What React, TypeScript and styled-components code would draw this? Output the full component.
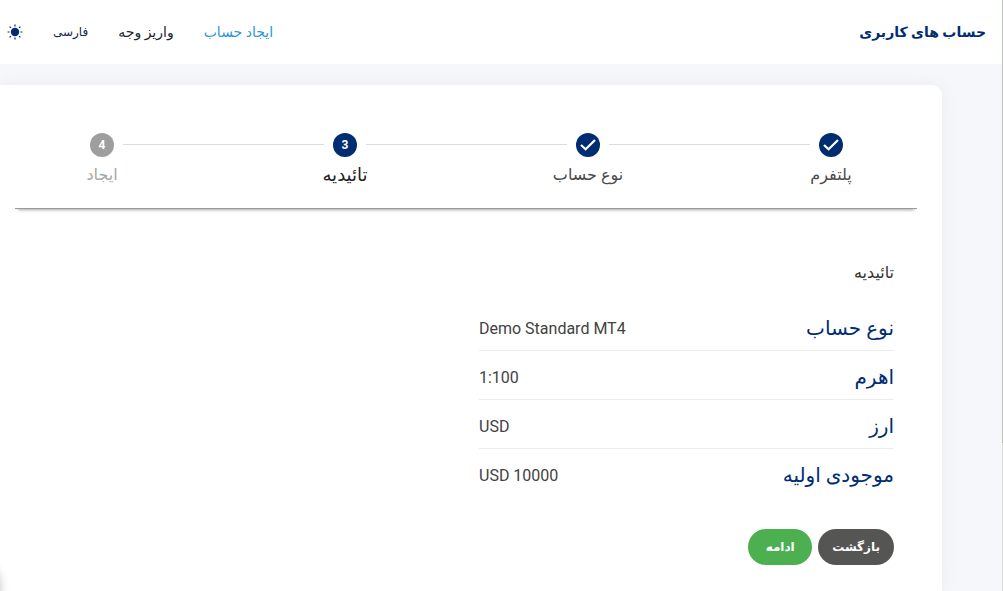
import React from "react";
import styled, { createGlobalStyle, css } from "styled-components";

const navy = "#002d72";
const sans = `Roboto, "DejaVu Sans", sans-serif`;

const GlobalStyle = createGlobalStyle`
  *, *::before, *::after { box-sizing: border-box; }
  body {
    margin: 0;
    background: #f6f7fa;
    color: #212121;
    font-family: ${sans};
    font-size: 14px;
    overflow: hidden;
  }
  h1, h2, dl, dd, ol { margin: 0; padding: 0; }
`;

const Page = styled.div`
  position: relative;
  display: flex;
  flex-direction: row-reverse;
  height: 100vh;
  overflow: hidden;
`;

const Main = styled.div`
  flex: 1;
  min-width: 0;
`;

const ScrollTrack = styled.div`
  order: 1;
  width: 1px;
  background: #dcdcdc;
`;

const ScrollThumb = styled.div`
  height: 75%;
  background: #bfc1bd;
`;

const FloatingWidget = styled.div`
  position: absolute;
  bottom: -24px;
  left: -60px;
  width: 60px;
  height: 60px;
  border-radius: 50%;
  box-shadow: 0 2px 10px rgba(0, 0, 0, 0.25);
`;

const Header = styled.header`
  display: flex;
  align-items: center;
  justify-content: space-between;
  height: 64px;
  padding: 0 16px 0 7px;
  background: #fff;
`;

const Title = styled.h1`
  color: ${navy};
  font-size: 14px;
  line-height: 24px;
  font-weight: 700;
`;

const Nav = styled.nav`
  display: flex;
  align-items: center;
  gap: 30px;
  line-height: 24px;
`;

const NavLink = styled.a<{ $active?: boolean }>`
  color: ${(p) => (p.$active ? "#2b97db" : "#1c2431")};
  text-decoration: none;
`;

const plainButton = css`
  padding: 0;
  border: 0;
  background: none;
  font: inherit;
  cursor: pointer;
`;

const LanguageButton = styled.button`
  ${plainButton}
  color: #14264a;
  font-size: 12px;
`;

const ThemeButton = styled.button`
  ${plainButton}
  display: flex;
`;

const Card = styled.main`
  min-height: calc(100vh - 85px);
  margin: 21px 60px 0 0;
  padding: 48px 25px 26px 15px;
  border-radius: 0 10px 0 0;
  background: #fff;
  box-shadow: 0 0 16px rgba(60, 70, 110, 0.07);
`;

const Stepper = styled.ol`
  display: flex;
  align-items: flex-start;
  height: 76px;
  padding: 0 65px 0 66px;
  list-style: none;
  border-bottom: 1px solid #9a9a9a;
  box-shadow: 0 4px 3px -3px rgba(0, 0, 0, 0.35);
`;

type StepState = "done" | "current" | "upcoming";

const StepItem = styled.li`
  display: flex;
  flex: 0 0 42px;
  min-width: 0;
  flex-direction: column;
  align-items: center;
  gap: 6px;
`;

const Connector = styled.li`
  flex: 1;
  height: 1px;
  margin-top: 11px;
  background: #dcdcdc;
`;

const StepCircle = styled.span<{ $state: StepState }>`
  display: flex;
  align-items: center;
  justify-content: center;
  width: 24px;
  height: 24px;
  border-radius: 50%;
  background: ${(p) => (p.$state === "upcoming" ? "#9e9e9e" : navy)};
  color: #fff;
  font-size: 12px;
  line-height: 22px;
  font-weight: 700;
`;

const StepLabel = styled.span<{ $state: StepState }>`
  color: ${(p) => (p.$state === "upcoming" ? "#a6a6a6" : p.$state === "current" ? "#212121" : "#4a4a4a")};
  font-size: ${(p) => (p.$state === "current" ? 18 : 16)}px;
  line-height: 24px;
  white-space: nowrap;
`;

const Content = styled.section`
  padding: 52px 23px 0;
`;

const Subtitle = styled.h2`
  font-size: 16px;
  line-height: 24px;
  font-weight: 400;
  color: #333;
`;

const Summary = styled.dl`
  width: calc(50% - 13px);
  margin-top: 17px;
`;

const SummaryRow = styled.div`
  display: flex;
  align-items: center;
  justify-content: space-between;
  height: 49px;
  padding-top: 4px;
  border-bottom: 1px solid #ececec;
  &:last-child { border-color: transparent; }
`;

const Term = styled.dt`
  color: ${navy};
  font-size: 20px;
  line-height: 32px;
`;

const Value = styled.dd`
  padding-top: 2px;
  color: #424242;
  font-size: 16px;
  line-height: 24px;
`;

const Actions = styled.div`
  display: flex;
  gap: 6px;
  margin-top: 31px;
`;

const PillButton = styled.button<{ $primary?: boolean }>`
  height: 36px;
  min-width: 64px;
  padding: 0 14px;
  border: 0;
  border-radius: 18px;
  background: ${(p) => (p.$primary ? "#4caf50" : "#555553")};
  color: #fff;
  font-family: ${sans};
  font-size: 12px;
  line-height: 24px;
  font-weight: 700;
  cursor: pointer;
`;

const steps: { label: string; state: StepState }[] = [
  { label: "پلتفرم", state: "done" },
  { label: "نوع حساب", state: "done" },
  { label: "تائیدیه", state: "current" },
  { label: "ایجاد", state: "upcoming" },
];

const details = [
  { term: "نوع حساب", value: "Demo Standard MT4" },
  { term: "اهرم", value: "1:100" },
  { term: "ارز", value: "USD" },
  { term: "موجودی اولیه", value: "USD 10000" },
];

const SunIcon = () => (
  <svg width="16" height="16" viewBox="0 0 16 16" aria-hidden="true">
    <circle cx="8" cy="8" r="4.2" fill={navy} />
    <path
      d="M8 .6v2M8 13.4v2M.6 8h2M13.4 8h2M2.6 2.6l1.3 1.3M12.1 12.1l1.3 1.3M2.6 13.4l1.3-1.3M12.1 3.9l1.3-1.3"
      stroke={navy}
      strokeWidth="1.2"
      fill="none"
    />
  </svg>
);

const CheckIcon = () => (
  <svg width="24" height="24" viewBox="0 0 24 24" aria-hidden="true">
    <path d="M5 12l4.6 4.3L19 7" stroke="#fff" strokeWidth="2.2" fill="none" />
  </svg>
);

export default function App() {
  return (
    <Page dir="rtl" lang="fa">
      <GlobalStyle />
      <Main>
        <Header>
          <Title>حساب های کاربری</Title>
          <Nav>
            <NavLink href="#create" $active>ایجاد حساب</NavLink>
            <NavLink href="#deposit">واریز وجه</NavLink>
            <LanguageButton type="button">فارسی</LanguageButton>
            <ThemeButton type="button" aria-label="پوسته"><SunIcon /></ThemeButton>
          </Nav>
        </Header>
        <Card>
          <Stepper>
            {steps.map((step, i) => (
              <React.Fragment key={step.label}>
                {i > 0 && <Connector aria-hidden="true" />}
                <StepItem aria-current={step.state === "current" ? "step" : undefined}>
                  <StepCircle $state={step.state}>
                    {step.state === "done" ? <CheckIcon /> : i + 1}
                  </StepCircle>
                  <StepLabel $state={step.state}>{step.label}</StepLabel>
                </StepItem>
              </React.Fragment>
            ))}
          </Stepper>
          <Content>
            <Subtitle>تائیدیه</Subtitle>
            <Summary>
              {details.map((d) => (
                <SummaryRow key={d.term}>
                  <Term>{d.term}</Term>
                  <Value dir="ltr">{d.value}</Value>
                </SummaryRow>
              ))}
            </Summary>
            <Actions>
              <PillButton type="button">بازگشت</PillButton>
              <PillButton type="button" $primary>ادامه</PillButton>
            </Actions>
          </Content>
        </Card>
      </Main>
      <ScrollTrack aria-hidden="true"><ScrollThumb /></ScrollTrack>
      <FloatingWidget aria-hidden="true" />
    </Page>
  );
}
